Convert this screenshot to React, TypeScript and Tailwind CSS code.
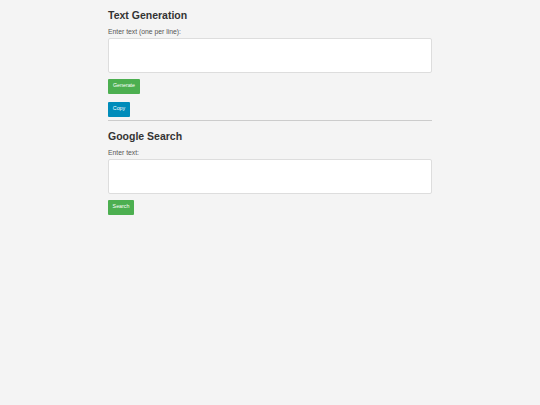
export default function App() {
  return (
    <div className="min-h-[405px] bg-[#f4f4f4] font-['Liberation_Sans',Arial,sans-serif] text-[#333]">
      <div className="mx-auto w-[324px] pt-[7.5px]">
        <section>
          <h2 className="text-[10.5px] leading-[14px] font-bold mb-[6.5px]">Text Generation</h2>
          <label className="block text-[6.8px] leading-[8px] text-[#555] mb-[1.5px]">Enter text (one per line):</label>
          <div className="h-[35px] bg-white border border-[#ddd] rounded-[2px]" />
          <button className="mt-[6px] block h-[15px] w-[32px] bg-[#4caf50] text-white text-[5.3px] rounded-[1px]">Generate</button>
          <button className="mt-[8px] block h-[15px] w-[22px] bg-[#008cba] text-white text-[5.3px] rounded-[1px]">Copy</button>
        </section>
        <hr className="mt-[3px] border-t border-[#ccc]" />
        <section>
          <h2 className="text-[10.5px] leading-[14px] font-bold mt-[8px] mb-[6.5px]">Google Search</h2>
          <label className="block text-[6.8px] leading-[8px] text-[#555] mb-[1.5px]">Enter text:</label>
          <div className="h-[35px] bg-white border border-[#ddd] rounded-[2px]" />
          <button className="mt-[6px] block h-[15px] w-[26px] bg-[#4caf50] text-white text-[5.3px] rounded-[1px]">Search</button>
        </section>
      </div>
    </div>
  );
}
